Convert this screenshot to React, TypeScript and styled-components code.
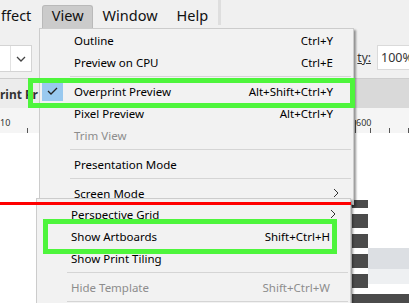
import styled, { createGlobalStyle } from "styled-components";

const GlobalStyle = createGlobalStyle`
  html, body {
    margin: 0;
    padding: 0;
    background: #f0f0f0;
  }
  body {
    font-family: "Noto Sans", "Noto Sans CJK KR", sans-serif;
  }
`;

interface Entry {
  label?: string;
  shortcut?: string;
  disabled?: boolean;
  checked?: boolean;
  sub?: boolean;
  sep?: boolean;
}

const viewMenu: Entry[] = [
  { label: "Outline", shortcut: "Ctrl+Y" },
  { label: "Preview on CPU", shortcut: "Ctrl+E" },
  { sep: true },
  { label: "Overprint Preview", shortcut: "Alt+Shift+Ctrl+Y", checked: true },
  { label: "Pixel Preview", shortcut: "Alt+Ctrl+Y" },
  { label: "Trim View", disabled: true },
  { sep: true },
  { label: "Presentation Mode" },
  { sep: true },
  { label: "Screen Mode", sub: true },
];

const viewMenuLower: Entry[] = [
  { label: "Perspective Grid", sub: true },
  { label: "Show Artboards", shortcut: "Shift+Ctrl+H" },
  { label: "Show Print Tiling" },
  { sep: true },
  { label: "Hide Template", shortcut: "Shift+Ctrl+W", disabled: true },
  { sep: true },
];

const Screen = styled.div`
  position: relative;
  width: 409px;
  height: 303px;
  overflow: hidden;
  display: flex;
  flex-direction: column;
  background: #f0f0f0;
`;

const MenuBar = styled.div`
  height: 30px;
  box-sizing: border-box;
  padding-top: 5px;
  display: flex;
  align-items: flex-start;
  font-size: 14.5px;
  color: #111;
`;

const BarItem = styled.div<{ $active?: boolean; $first?: boolean }>`
  height: 23px;
  line-height: 19px;
  box-sizing: border-box;
  padding: ${(p) => (p.$first ? "0 10px 0 0" : "0 8.5px")};
  background: ${(p) => (p.$active ? "#cbcbcb" : "transparent")};
  border: 1px solid ${(p) => (p.$active ? "#b9b9b9" : "transparent")};
  border-bottom: none;
  border-radius: 3px 3px 0 0;
  white-space: nowrap;
`;

const BarDivider = styled.div`
  width: 3px;
  height: 25px;
  margin-left: 0;
  margin-top: -5px;
  background: #dedede;
`;

const Toolbar = styled.div`
  height: 48px;
  box-sizing: border-box;
  padding-top: 15px;
  display: flex;
  align-items: flex-start;
`;

const Dropdown = styled.div`
  width: 32px;
  height: 27px;
  box-sizing: border-box;
  background: #fff;
  border: 1px solid #d4d4d4;
  border-left: none;
  display: flex;
`;

const DropField = styled.div`
  width: 10px;
  border-right: 1px solid #e2e2e2;
`;

const DropButton = styled.div`
  flex: 1;
  display: flex;
  align-items: center;
  justify-content: center;
`;

const Spacer = styled.div`
  flex: 1;
`;

const OpacityGroup = styled.div`
  display: flex;
  align-items: center;
  gap: 6px;
  margin-right: -14px;
  height: 25px;
`;

const OpacityLabel = styled.span`
  font-size: 12px;
  color: #333;
  text-decoration: underline;
`;

const OpacityInput = styled.div`
  width: 46px;
  height: 25px;
  box-sizing: border-box;
  background: #fff;
  border: 1px solid #dadada;
  font-size: 12.5px;
  color: #333;
  line-height: 23px;
  padding-left: 3px;
`;

const TabBar = styled.div`
  height: 29px;
  background: #d9d9d9;
  border-top: 1px solid #cdcdcd;
  display: flex;
`;

const ActiveTab = styled.div`
  width: 40px;
  background: #ececec;
  overflow: hidden;
  white-space: nowrap;
  font-size: 12px;
  font-weight: 700;
  color: #333;
  padding-top: 7px;
  box-sizing: border-box;
`;

const Ruler = styled.svg`
  display: block;
  width: 409px;
  height: 25px;
  background: #f5f5f5;
  flex-shrink: 0;
`;

const Canvas = styled.div`
  flex: 1;
  background: #fff;
  display: flex;
`;

const Thumb = styled.div`
  width: 57px;
  padding-top: 67px;
  display: flex;
  flex-direction: column;
`;

const ThumbBody = styled.div`
  height: 94px;
  display: flex;
`;

const Stripes = styled.div`
  width: 16px;
  background: repeating-linear-gradient(
    to bottom,
    #4b4b4b 0 8px,
    #ffffff 8px 14px,
    #4b4b4b 14px 20px
  );
`;

const ThumbRows = styled.div`
  flex: 1;
  display: flex;
  flex-direction: column;
`;

const ThumbRow = styled.div<{ $h: number; $bg: string }>`
  height: ${(p) => p.$h}px;
  background: ${(p) => p.$bg};
`;

const ThumbFoot = styled.div`
  flex: 1;
  background: #4b4b4b;
`;

const MenuPanel = styled.div<{ $left: number; $top: number; $pad: number }>`
  position: absolute;
  left: ${(p) => p.$left}px;
  top: ${(p) => p.$top}px;
  width: 315px;
  box-sizing: border-box;
  background: #f2f2f2;
  border: 1px solid #cccccc;
  box-shadow: 2px 2px 2px rgba(0, 0, 0, 0.4);
  padding-top: ${(p) => p.$pad}px;
  font-size: 11.5px;
  color: #000;
`;

const Item = styled.div<{ $disabled?: boolean }>`
  height: 22px;
  display: grid;
  grid-template-columns: 34px 1fr auto;
  align-items: center;
  padding-right: 20px;
  white-space: nowrap;
  color: ${(p) => (p.$disabled ? "#8d8d8d" : "#000")};
`;

const CheckCell = styled.div<{ $on?: boolean }>`
  width: 21px;
  height: 20px;
  margin-left: 2px;
  background: ${(p) => (p.$on ? "#99c9ef" : "transparent")};
  display: flex;
  align-items: center;
  justify-content: center;
`;

const Shortcut = styled.span`
  text-align: right;
`;

const SubArrow = styled.span`
  display: flex;
  margin-right: -10px;
`;

const Separator = styled.div`
  height: 7px;
  margin: 0 2px 0 30px;
  display: flex;
  align-items: center;
  &::after {
    content: "";
    flex: 1;
    height: 1px;
    background: #d5d5d5;
  }
`;

const RedLine = styled.div`
  position: absolute;
  left: 0;
  top: 202px;
  width: 351px;
  height: 3px;
  background: #ff0000;
`;

const Highlight = styled.div<{ $x: number; $y: number; $w: number; $h: number }>`
  position: absolute;
  left: ${(p) => p.$x}px;
  top: ${(p) => p.$y}px;
  width: ${(p) => p.$w}px;
  height: ${(p) => p.$h}px;
  box-sizing: border-box;
  border: 5px solid #4ef53c;
`;

function Chevron() {
  return (
    <svg width="6" height="10" viewBox="0 0 6 10">
      <polyline points="1,1 5,5 1,9" fill="none" stroke="#333" strokeWidth="1" />
    </svg>
  );
}

function Menu({ items, left, top, pad }: { items: Entry[]; left: number; top: number; pad: number }) {
  return (
    <MenuPanel $left={left} $top={top} $pad={pad}>
      {items.map((it, i) =>
        it.sep ? (
          <Separator key={i} />
        ) : (
          <Item key={i} $disabled={it.disabled}>
            <CheckCell $on={it.checked}>
              {it.checked && (
                <svg width="11" height="8" viewBox="0 0 11 8">
                  <polyline points="1,4 4,7 10,1" fill="none" stroke="#222" strokeWidth="1.3" />
                </svg>
              )}
            </CheckCell>
            <span>{it.label}</span>
            {it.sub ? (
              <SubArrow>
                <Chevron />
              </SubArrow>
            ) : (
              <Shortcut>{it.shortcut}</Shortcut>
            )}
          </Item>
        )
      )}
    </MenuPanel>
  );
}

export default function App() {
  return (
    <Screen>
      <GlobalStyle />
      <MenuBar>
        <BarItem $first>ffect</BarItem>
        <BarItem $active>View</BarItem>
        <BarItem>Window</BarItem>
        <BarItem>Help</BarItem>
        <BarDivider />
      </MenuBar>

      <Toolbar>
        <Dropdown>
          <DropField />
          <DropButton>
            <svg width="10" height="6" viewBox="0 0 10 6">
              <polyline points="1,1 5,5 9,1" fill="none" stroke="#444" strokeWidth="1.3" />
            </svg>
          </DropButton>
        </Dropdown>
        <Spacer />
        <OpacityGroup>
          <OpacityLabel>ty:</OpacityLabel>
          <OpacityInput>100%</OpacityInput>
        </OpacityGroup>
      </Toolbar>

      <TabBar>
        <ActiveTab>rint Pr</ActiveTab>
      </TabBar>

      <Ruler viewBox="0 0 409 25">
        <text x="0" y="18" fontSize="9" fill="#333" fontFamily="Noto Sans, sans-serif">10</text>
        <line x1="27.5" y1="20" x2="27.5" y2="25" stroke="#555" />
        <line x1="355.5" y1="12" x2="355.5" y2="25" stroke="#555" />
        <text x="356" y="18" fontSize="9" fill="#333" fontFamily="Noto Sans, sans-serif">600</text>
        <line x1="370.5" y1="20" x2="370.5" y2="25" stroke="#555" />
        <line x1="389.5" y1="20" x2="389.5" y2="25" stroke="#555" />
        <line x1="408.5" y1="20" x2="408.5" y2="25" stroke="#555" />
      </Ruler>

      <Canvas>
        <Spacer />
        <Thumb>
          <ThumbBody>
            <Stripes />
            <ThumbRows>
              <ThumbRow $h={48} $bg="#ffffff" />
              <ThumbRow $h={21} $bg="#dcdfe3" />
              <ThumbRow $h={15} $bg="#eef0f2" />
              <ThumbRow $h={10} $bg="#ffffff" />
            </ThumbRows>
          </ThumbBody>
          <ThumbFoot />
        </Thumb>
      </Canvas>

      <Menu items={viewMenu} left={39} top={28} pad={0} />
      <Menu items={viewMenuLower} left={36} top={198} pad={4} />
      <RedLine />
      <Highlight $x={28} $y={78} $w={327} $h={30} />
      <Highlight $x={43} $y={219} $w={294} $h={35} />
    </Screen>
  );
}
